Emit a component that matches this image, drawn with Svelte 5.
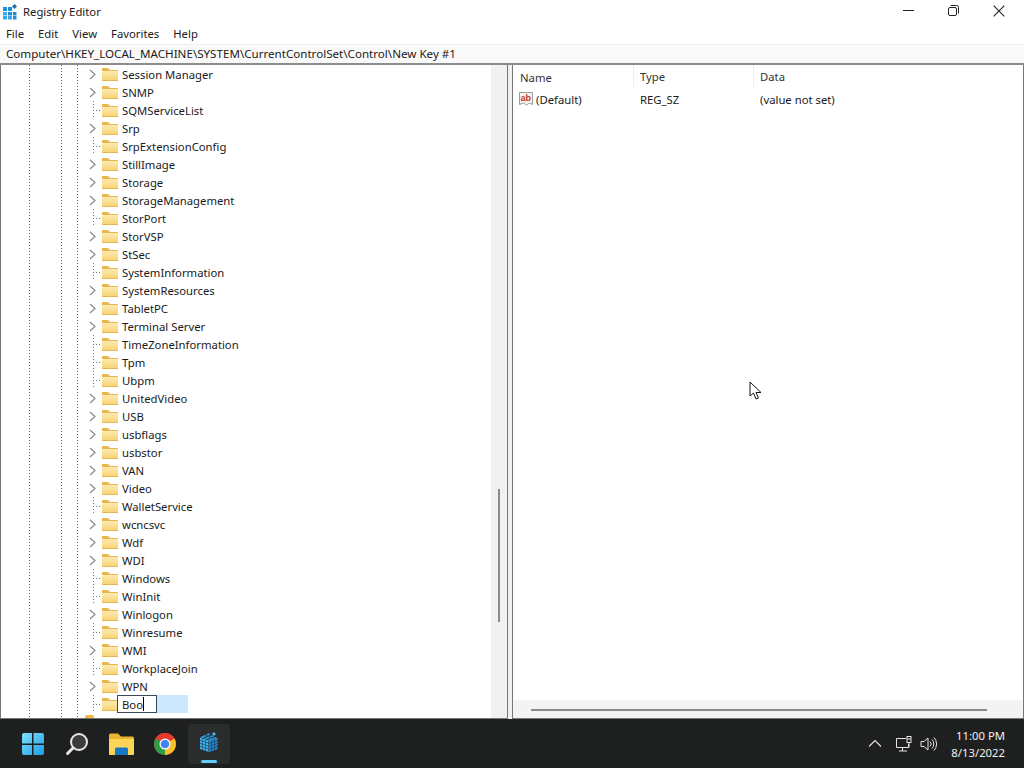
<script>
	// name, has expander
	const keys = [
		['Session Manager', true], ['SNMP', true], ['SQMServiceList', false], ['Srp', true],
		['SrpExtensionConfig', false], ['StillImage', true], ['Storage', true], ['StorageManagement', true],
		['StorPort', false], ['StorVSP', true], ['StSec', true], ['SystemInformation', false],
		['SystemResources', true], ['TabletPC', true], ['Terminal Server', true], ['TimeZoneInformation', false],
		['Tpm', false], ['Ubpm', false], ['UnitedVideo', true], ['USB', true], ['usbflags', true],
		['usbstor', true], ['VAN', true], ['Video', true], ['WalletService', false], ['wcncsvc', true],
		['Wdf', true], ['WDI', true], ['Windows', false], ['WinInit', false], ['Winlogon', true],
		['Winresume', false], ['WMI', true], ['WorkplaceJoin', false], ['WPN', true]
	];
	const menus = ['File', 'Edit', 'View', 'Favorites', 'Help'];

	// cells of the regedit cube on the taskbar
	const cells = [];
	for (let c = 0; c < 3; c++) for (let r = 0; r < 4; r++) cells.push({ x: c * 3, y: r * 3 });
</script>

{#snippet folder()}
	<svg class="folder" width="18" height="16" viewBox="0 0 18 16">
		<defs>
			<linearGradient id="fbody" x1="0" y1="0" x2="0" y2="1">
				<stop offset="0" stop-color="#fdeaaf" />
				<stop offset="1" stop-color="#f8d272" />
			</linearGradient>
		</defs>
		<path d="M1 2h6l2 2h8v11H1z" fill="#e9b84c" />
		<path d="M1 5h16v10H1z" fill="url(#fbody)" />
		<path d="M1 14.500h16" stroke="#eab650" stroke-width="1" />
	</svg>
{/snippet}

<div class="window">
	<header class="titlebar">
		<svg class="appicon" width="17" height="17" viewBox="0 0 17 17">
			<rect x="2" y="4" width="4" height="4" fill="#1c8fd6" /><rect x="7" y="4" width="4" height="4" fill="#1c8fd6" />
			<rect x="2" y="9" width="4" height="3.5" fill="#3aa7e6" /><rect x="7" y="9" width="4" height="3.5" fill="#1c8fd6" />
			<rect x="2" y="13" width="4" height="3.5" fill="#3aa7e6" /><rect x="7" y="13" width="4" height="3.5" fill="#3aa7e6" />
			<rect x="12" y="9" width="3.5" height="3.5" fill="#1c8fd6" /><rect x="12" y="13" width="3.5" height="3.5" fill="#1c8fd6" />
			<path d="M13.5 1 16 3.5 13.5 6 11 3.5z" fill="#1f6fa8" />
		</svg>
		<span class="title">Registry Editor</span>
		<div class="controls">
			<svg width="12" height="12" viewBox="0 0 12 12"><path d="M0 5.500h11" stroke="#222" /></svg>
			<svg width="12" height="12" viewBox="0 0 12 12" fill="none" stroke="#222"><rect x=".5" y="2.500" width="8" height="8" rx="1.500" /><path d="M2.500.5h6a2 2 0 0 1 2 2v6" /></svg>
			<svg width="12" height="12" viewBox="0 0 12 12"><path d="M.7.7l10.600 10.600M11.300.7.7 11.300" stroke="#222" stroke-width="1.100" /></svg>
		</div>
	</header>

	<nav class="menubar">
		{#each menus as m}<span>{m}</span>{/each}
	</nav>

	<div class="address">Computer\HKEY_LOCAL_MACHINE\SYSTEM\CurrentControlSet\Control\New Key #1</div>

	<main class="panes">
		<section class="tree">
			<div class="rows">
				{#each keys as [name, expandable]}
					<div class="row">
						{#if expandable}
							<svg class="chevron" width="9" height="11" viewBox="0 0 9 11"><path d="M2 1l5 4.500L2 10" fill="none" stroke="#8a8a8a" stroke-width="1.200" /></svg>
						{:else}
							<span class="stub"></span>
						{/if}
						{@render folder()}
						<span class="label">{name}</span>
					</div>
				{/each}
				<div class="row">
					<span class="stub"></span>
					{@render folder()}
					<span class="edit-wrap"><span class="edit">Boo<i class="caret"></i></span></span>
				</div>
				<div class="row">
					<span class="clipped-folder"></span>
				</div>
			</div>
			<div class="vscroll"><div class="vthumb"></div></div>
		</section>

		<section class="list">
			<div class="list-head">
				<span class="col-name">Name</span>
				<span class="col-type">Type</span>
				<span class="col-data">Data</span>
			</div>
			<div class="list-row">
				<span class="col-name default">
					<svg width="16" height="16" viewBox="0 0 16 16">
						<path d="M1.500 1.500h13v12l-3-1.500-3 2-3-2-4 1.500z" fill="#f7f3ef" stroke="#9c9a98" />
						<text x="2.500" y="10" font-family="Liberation Sans" font-size="9" font-weight="700" fill="#c0392b">ab</text>
					</svg>
					(Default)
				</span>
				<span class="col-type">REG_SZ</span>
				<span class="col-data">(value not set)</span>
			</div>
			<div class="hscroll"><div class="hthumb"></div></div>
		</section>
	</main>

	<svg class="pointer" width="14" height="20" viewBox="0 0 14 20">
		<path d="M1 1v14l3.500-3 2.500 6 2.500-1-2.500-5.500H12z" fill="#fff" stroke="#111" stroke-width="1" />
	</svg>
</div>

<footer class="taskbar">
	<div class="apps">
		<span class="app">
			<svg width="24" height="24" viewBox="0 0 24 24">
				<defs><linearGradient id="win" x1="0" y1="0" x2="1" y2="1"><stop offset="0" stop-color="#7fe0fb" /><stop offset="1" stop-color="#1a9fe8" /></linearGradient></defs>
				<path d="M1 3a2 2 0 0 1 2-2h8v10.500H1zM12.500 1H21a2 2 0 0 1 2 2v8.500H12.500zM1 13h10v10H3a2 2 0 0 1-2-2zM12.500 13H23v8a2 2 0 0 1-2 2h-8.500z" fill="url(#win)" />
			</svg>
		</span>
		<span class="app">
			<svg width="24" height="24" viewBox="0 0 24 24">
				<circle cx="14" cy="10" r="8" fill="#3c3c3c" stroke="#e8e8e8" stroke-width="2" />
				<path d="M8 16l-5.500 5.500" stroke="#e8e8e8" stroke-width="3" stroke-linecap="round" />
			</svg>
		</span>
		<span class="app">
			<svg width="26" height="24" viewBox="0 0 26 24">
				<path d="M1 3a1.500 1.500 0 0 1 1.500-1.500H10l3 3h11.500A1.500 1.500 0 0 1 26 6v3H1z" fill="#e9b52e" />
				<path d="M1 7h25v15a1 1 0 0 1-1 1H2a1 1 0 0 1-1-1z" fill="#fcd558" />
				<path d="M7 23v-6a1.500 1.500 0 0 1 1.500-1.500h10A1.500 1.500 0 0 1 20 17v6z" fill="#1479c4" />
			</svg>
		</span>
		<span class="app">
			<svg width="24" height="24" viewBox="0 0 24 24">
				<circle cx="12" cy="12" r="11" fill="#e33b2e" />
				<path d="M12 12 2.500 6.500A11 11 0 0 0 12 23z" fill="#2e9e47" />
				<path d="M12 12v11A11 11 0 0 0 21.500 6.500z" fill="#fbc02d" />
				<path d="M2.500 6.500A11 11 0 0 1 21.500 6.500H12z" fill="#e33b2e" />
				<circle cx="12" cy="12" r="5.500" fill="#fff" />
				<circle cx="12" cy="12" r="4.300" fill="#3f85ec" />
			</svg>
		</span>
		<span class="app active">
			<svg width="22" height="24" viewBox="0 0 22 24">
				<g transform="matrix(1,.35,0,1,2,5.500)" fill="#37b0f0">
					{#each cells as c}<rect x={c.x} y={c.y} width="2.500" height="2.500" />{/each}
				</g>
				<g transform="matrix(1,-.35,0,1,11,8.600)" fill="#1d86cf">
					{#each cells as c}<rect x={c.x} y={c.y} width="2.500" height="2.500" />{/each}
				</g>
				<path d="M2.500 5 7 3l2 1-4.500 2.200zM8 2.500 10.500 1.300l2 1L10 3.700zM6 6.500l4.500-2 2 1L8 7.500zM11.500 4.500l2.500-1.200 2 1-2.500 1.300zM9.500 8l4-2 2 1-4 2zM14.500 6.200l2.500-1.200 2 1-2.500 1.200z" fill="#2a9fe0" />
				<path d="M14 2 16 0l2 2-2 2z" fill="#3fb4ee" />
			</svg>
			<i class="underline"></i>
		</span>
	</div>
	<div class="tray">
		<svg class="tray-up" width="14" height="14" viewBox="0 0 14 14"><path d="M1 9.500l6-6 6 6" fill="none" stroke="#e6e6e6" stroke-width="1.100" /></svg>
		<svg class="tray-net" width="18" height="16" viewBox="0 0 18 16" fill="none" stroke="#e6e6e6"><path d="M11 2.500H1.500v9h12V8M7.500 11.500V15M4 15h8" /><rect x="12" y=".5" width="4" height="6" /><path d="M14 6.500v5M12 3h4" /></svg>
		<svg class="tray-vol" width="17" height="16" viewBox="0 0 17 16" fill="none" stroke="#e6e6e6"><path d="M1 5.500v5h3l4 3.500V2L4 5.500z" /><path d="M10 5.500a3.500 3.500 0 0 1 0 5M12 3.500a6.500 6.500 0 0 1 0 9M14 1.500a9.500 9.500 0 0 1 0 13" /></svg>
		<div class="clock"><span>11:00 PM</span><span>8/13/2022</span></div>
	</div>
</footer>

<style>
	:global(body) {
		margin: 0;
		background: #fff;
		font-family: "Noto Sans", "Open Sans", sans-serif;
		font-size: 11.3px;
		color: #1a1a1a;
		overflow: hidden;
	}

	.window {
		position: relative;
		height: 719px;
		display: flex;
		flex-direction: column;
		overflow: hidden;
	}

	.titlebar {
		height: 22px;
		display: flex;
		align-items: center;
		padding-left: 1px;
		gap: 5px;
	}

	.controls {
		margin-left: auto;
		display: flex;
		gap: 33px;
		padding-right: 19px;
	}

	.menubar {
		height: 22px;
		display: flex;
		align-items: center;
		gap: 14px;
		padding-left: 6px;
	}

	.address {
		height: 19px;
		line-height: 19px;
		padding-left: 6px;
		font-size: 11.6px;
		background: #f9f9f9;
		box-shadow: inset 0 1px 0 #f0f0f0;
	}

	.panes {
		flex: 1;
		min-height: 0;
		display: grid;
		grid-template-columns: 508px 1fr;
		gap: 4px;
		border-top: 2px solid #8c8c8c;
		background: #f0f0f0;
	}

	.tree {
		display: flex;
		background: #fff;
		border: 1px solid #777;
		border-top: 0;
		min-height: 0;
		overflow: hidden;
	}

	.rows {
		flex: 1;
		background-image:
			repeating-linear-gradient(#666 0 1px, transparent 1px 3px),
			repeating-linear-gradient(#666 0 1px, transparent 1px 3px),
			repeating-linear-gradient(#666 0 1px, transparent 1px 3px);
		background-size: 1px 100%;
		background-position: 28px 0, 60px 0, 76px 0;
		background-repeat: no-repeat;
		overflow: hidden;
	}

	.row {
		height: 18px;
		display: flex;
		align-items: center;
		padding-left: 87px;
	}

	.chevron {
		width: 9px;
		margin-right: 4px;
		flex: none;
	}

	.stub {
		width: 13px;
		height: 18px;
		flex: none;
		background-image:
			repeating-linear-gradient(#777 0 1px, transparent 1px 3px),
			repeating-linear-gradient(90deg, #777 0 1px, transparent 1px 3px);
		background-size: 1px 100%, 100% 1px;
		background-position: 5px 0, 5px 9px;
		background-repeat: no-repeat;
	}

	.folder {
		flex: none;
		margin-right: 3px;
	}

	.clipped-folder {
		margin-left: -3px;
		align-self: flex-start;
		margin-top: 2px;
		width: 9px;
		height: 3px;
		border-radius: 2px 2px 0 0;
		background: #f0b93f;
	}

	.label {
		white-space: nowrap;
	}

	.edit-wrap {
		display: flex;
		width: 71px;
		height: 18px;
		margin-left: -5px;
		background: #cce8ff;
	}

	.edit {
		box-sizing: border-box;
		width: 40px;
		height: 18px;
		border: 1px solid #3a4a5a;
		background: #fff;
		padding-left: 4px;
		display: flex;
		align-items: center;
	}

	.caret {
		width: 1px;
		height: 14px;
		background: #000;
	}

	.vscroll {
		width: 16px;
		background: #f1f1f1;
		flex: none;
		padding-top: 424px;
		box-sizing: border-box;
	}

	.vthumb {
		width: 2px;
		height: 133px;
		margin-left: 7px;
		background: #8b8b8b;
	}

	.list {
		background: #fff;
		border: 1px solid #777;
		border-top: 0;
		display: flex;
		flex-direction: column;
		min-height: 0;
	}

	.list-head,
	.list-row {
		display: flex;
		align-items: center;
	}

	.list-row {
		height: 20px;
	}

	.list-head {
		height: 24px;
		color: #333;
	}

	.col-name {
		box-sizing: border-box;
		width: 120px;
		padding-left: 7px;
		display: flex;
		align-items: center;
		gap: 2px;
	}

	.col-type {
		box-sizing: border-box;
		width: 120px;
		padding-left: 7px;
	}

	.col-data {
		padding-left: 7px;
	}

	.list-head .col-type,
	.list-head .col-data {
		border-left: 1px solid #eee;
		padding-left: 6px;
		line-height: 24px;
	}

	.default {
		padding-left: 5px;
	}

	.hscroll {
		margin-top: auto;
		height: 18px;
		background: #f3f3f3;
		padding: 9px 0 0 18px;
		box-sizing: border-box;
	}

	.hthumb {
		width: 456px;
		height: 2px;
		background: #8b8b8b;
	}

	.pointer {
		position: absolute;
		left: 749px;
		top: 381px;
	}

	.taskbar {
		height: 49px;
		background: #1e1f1f;
		display: flex;
		align-items: center;
		justify-content: space-between;
		color: #f2f2f2;
	}

	.apps {
		display: flex;
		padding-left: 12px;
		gap: 2px;
	}

	.app {
		position: relative;
		width: 42px;
		height: 40px;
		display: flex;
		align-items: center;
		justify-content: center;
		border-radius: 4px;
	}

	.active {
		background: #2b2c2c;
	}

	.underline {
		position: absolute;
		left: 13px;
		bottom: 1px;
		width: 16px;
		height: 3px;
		border-radius: 2px;
		background: #60cdff;
	}

	.tray {
		display: flex;
		align-items: center;
		padding-right: 19px;
	}

	.tray-net {
		margin-left: 13px;
	}

	.tray-vol {
		margin-left: 7px;
	}

	.clock {
		display: flex;
		flex-direction: column;
		align-items: flex-end;
		line-height: 17px;
		margin-left: 14px;
	}
</style>
